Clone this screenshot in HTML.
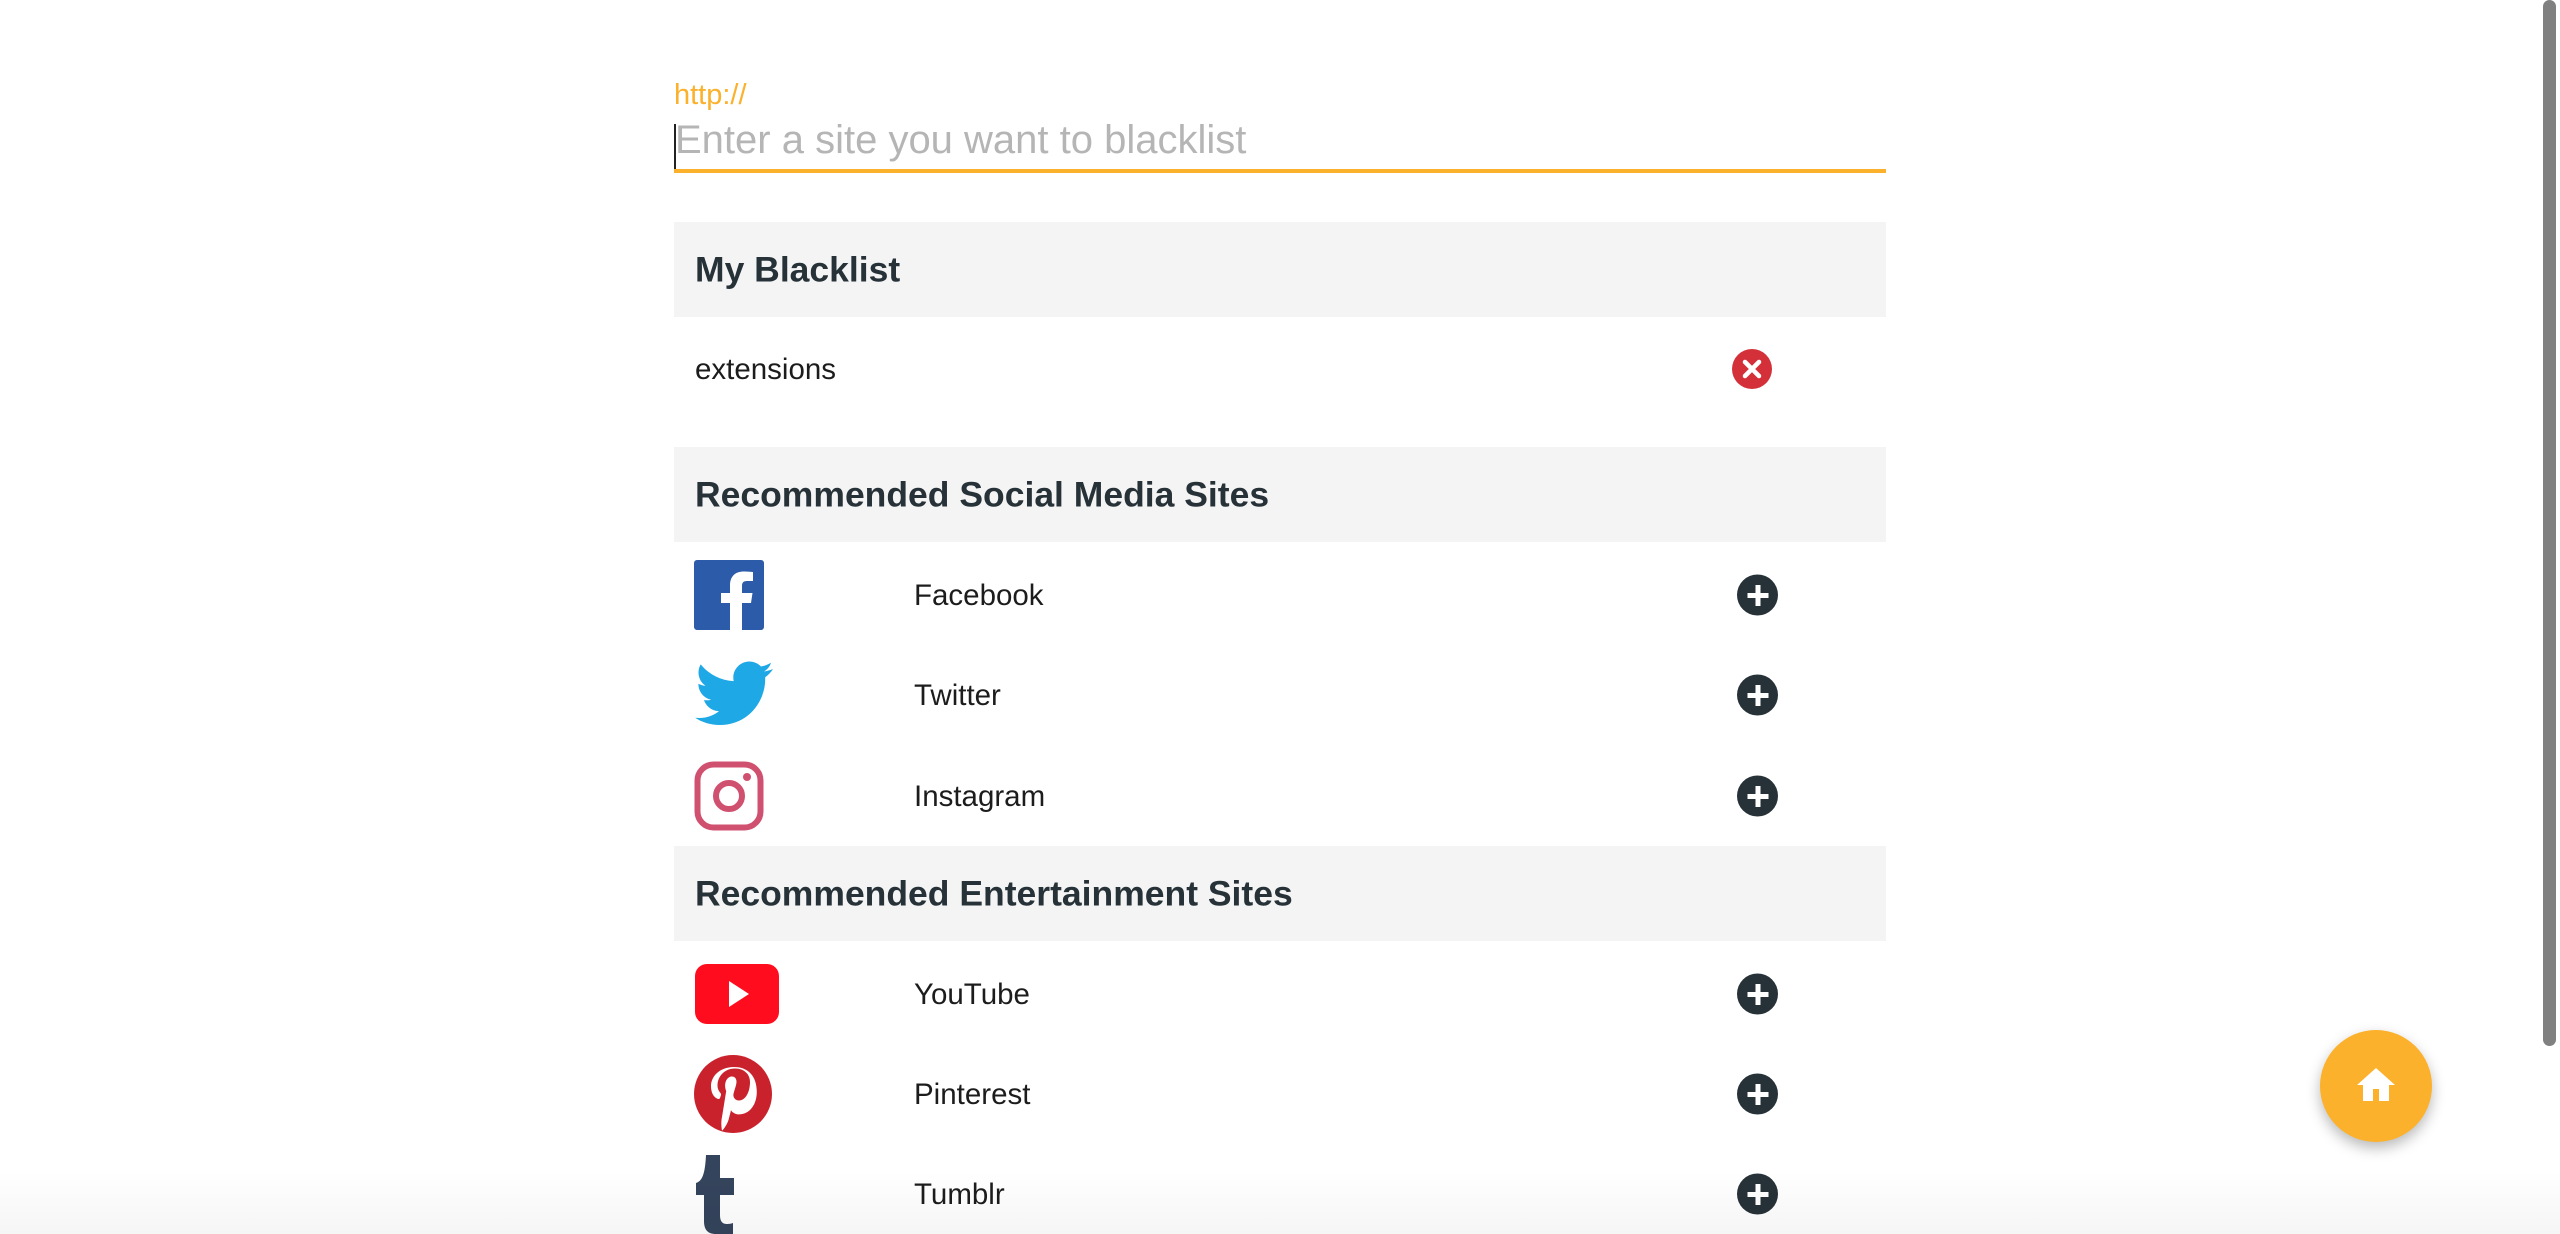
<!DOCTYPE html>
<html><head><meta charset="utf-8"><style>
*{margin:0;padding:0;box-sizing:border-box}
body{width:2560px;height:1234px;overflow:hidden;background:#fff;font-family:"Liberation Sans",Arial,sans-serif;position:relative}
.a{position:absolute}
.lab{left:674px;top:79px;font-size:29px;color:#fbb12b}
.ph{left:675px;top:118px;font-size:40px;color:#b5b5b5}
.caret{left:674px;top:124px;width:2px;height:46px;background:#222}
.ul{left:674px;top:169px;width:1212px;height:4px;background:#fbb12b}
.hd{left:674px;width:1212px;height:95px;background:#f4f4f4}
.hd span{position:absolute;left:21px;top:50%;transform:translateY(-50%);font-size:35.5px;font-weight:bold;color:#263238}
.txt{font-size:29.5px;color:#1c1c1c;transform:translateY(-50%)}
.plus{width:41px;height:41px;border-radius:50%;background:#263238;left:1737px;transform:translateY(-50%)}
.plus:before,.plus:after{content:"";position:absolute;background:#fff;left:50%;top:50%;transform:translate(-50%,-50%)}
.plus:before{width:21px;height:5px}.plus:after{width:5px;height:21px}
.ic{left:694px;transform:translateY(-50%)}
</style></head><body>
<div class="a lab">http://</div>
<div class="a ph">Enter a site you want to blacklist</div>
<div class="a caret"></div>
<div class="a ul"></div>

<div class="a hd" style="top:222px"><span>My Blacklist</span></div>
<div class="a txt" style="left:695px;top:370px">extensions</div>
<svg class="a" style="left:1732px;top:349px" width="40" height="40" viewBox="0 0 40 40"><circle cx="20" cy="20" r="20" fill="#d3303a"/><path d="M13 13L27 27M27 13L13 27" stroke="#fff" stroke-width="4.5" stroke-linecap="round"/></svg>

<div class="a hd" style="top:447px"><span>Recommended Social Media Sites</span></div>

<svg class="a ic" style="top:595px" width="70" height="70" viewBox="0 0 70 70"><rect width="70" height="70" rx="3" fill="#2c5ba9"/><path d="M48 70V43h9l1.5-10H48v-7c0-3 1-5 5-5h6V12c-1 0-5-.5-9-.5-9 0-14 5-14 14V33h-9v10h9v27z" fill="#fff"/></svg>
<div class="a txt" style="left:914px;top:596px">Facebook</div>
<div class="a plus" style="top:595px"></div>

<svg class="a ic" style="top:695px" width="80" height="70" viewBox="0 0 80 70"><path d="M79 9c-3 1.3-6 2-9 2.5 3.3-2 5.8-5 7-8.8-3 1.8-6.5 3.1-10 3.8C64 3.4 59.8 1.5 55.3 1.5c-8.8 0-16 7.2-16 16 0 1.3.1 2.5.4 3.6C26.4 20.5 14.6 14.1 6.7 4.4 5.3 6.8 4.5 9.5 4.5 12.5c0 5.6 2.8 10.5 7.1 13.3-2.6-.1-5.1-.8-7.2-2v.2c0 7.8 5.5 14.3 12.8 15.700-1.300.4-2.800.6-4.200.6-1 0-2-.1-3-.3 2 6.4 8 11 15 11.1C19.5 55.6 12.6 58 5 58c-1.3 0-2.6-.1-3.9-.2C8.2 62.4 16.6 65 25.6 65c29.5 0 45.6-24.4 45.6-45.6v-2.1C74.3 15.1 77 12.3 79 9z" fill="#1fa8e6"/></svg>
<div class="a txt" style="left:914px;top:696px">Twitter</div>
<div class="a plus" style="top:695px"></div>

<svg class="a ic" style="top:796px" width="70" height="70" viewBox="0 0 70 70"><rect x="3.5" y="3.5" width="63" height="63" rx="16" fill="none" stroke="#d05070" stroke-width="6"/><circle cx="35" cy="35" r="13" fill="none" stroke="#d05070" stroke-width="6"/><circle cx="53" cy="16" r="4" fill="#d05070"/></svg>
<div class="a txt" style="left:914px;top:797px">Instagram</div>
<div class="a plus" style="top:796px"></div>

<div class="a hd" style="top:846px"><span>Recommended Entertainment Sites</span></div>

<svg class="a ic" style="top:994px" width="86" height="62" viewBox="0 0 86 62"><rect x="1" y="1" width="84" height="60" rx="12" fill="#ff0d1f"/><path d="M35 18L55 31 35 44z" fill="#fff"/></svg>
<div class="a txt" style="left:914px;top:995px">YouTube</div>
<div class="a plus" style="top:994px"></div>

<svg class="a ic" style="top:1094px" width="78" height="78" viewBox="0 0 78 78"><circle cx="39" cy="39" r="39" fill="#c9222c"/><path d="M40 12c-15 0-23 10-23 19 0 6 2 11 7 13 1 0 1.5 0 2-1l1-3c0-1 0-1.5-1-2.5-1.5-2-2.5-4-2.5-7 0-9 7-17 17.5-17 9.5 0 15 6 15 13.5 0 10-4.5 18.5-11 18.5-3.6 0-6.3-3-5.5-6.6 1-4.4 3-9 3-12.2 0-2.8-1.5-5.2-4.7-5.2-3.700 0-6.700 3.900-6.700 9 0 3.300 1.100 5.500 1.100 5.500L28 62c-1.3 5.5-.2 12.3-.1 13 .1.4.5.5.8.2.3-.4 4.6-5.7 6-11l2.3-9c1.2 2.2 4.5 4.2 8 4.2 10.6 0 17.8-9.7 17.8-22.6C62.8 21 54 12 40 12z" fill="#fff"/></svg>
<div class="a txt" style="left:914px;top:1095px">Pinterest</div>
<div class="a plus" style="top:1094px"></div>

<svg class="a" style="left:694px;top:1155px" width="52" height="79" viewBox="0 0 52 79"><path d="M12 0h14v23h14v17H26v20c0 6 2 9 7 9 2 0 5-.5 6-1v11H22C13 79 10 74 10 66V40H2V28C8 26 11 20 12 0z" fill="#34445c"/></svg>
<div class="a txt" style="left:914px;top:1195px">Tumblr</div>
<div class="a plus" style="top:1194px"></div>

<div class="a" style="left:0;top:1170px;width:2560px;height:64px;background:linear-gradient(to bottom,rgba(0,0,0,0),rgba(0,0,0,.04))"></div>

<div class="a" style="left:2320px;top:1030px;width:112px;height:112px;border-radius:50%;background:#fbb12b;box-shadow:0 6px 14px rgba(0,0,0,.28)"></div>
<svg class="a" style="left:2356px;top:1066px" width="40" height="40" viewBox="0 0 40 40"><path d="M20 2L1 19h6v16h10v-12h6v12h10V19h6z" fill="#fff"/></svg>

<div class="a" style="left:2543px;top:0;width:13px;height:1046px;border-radius:7px;background:#808080"></div>
</body></html>
